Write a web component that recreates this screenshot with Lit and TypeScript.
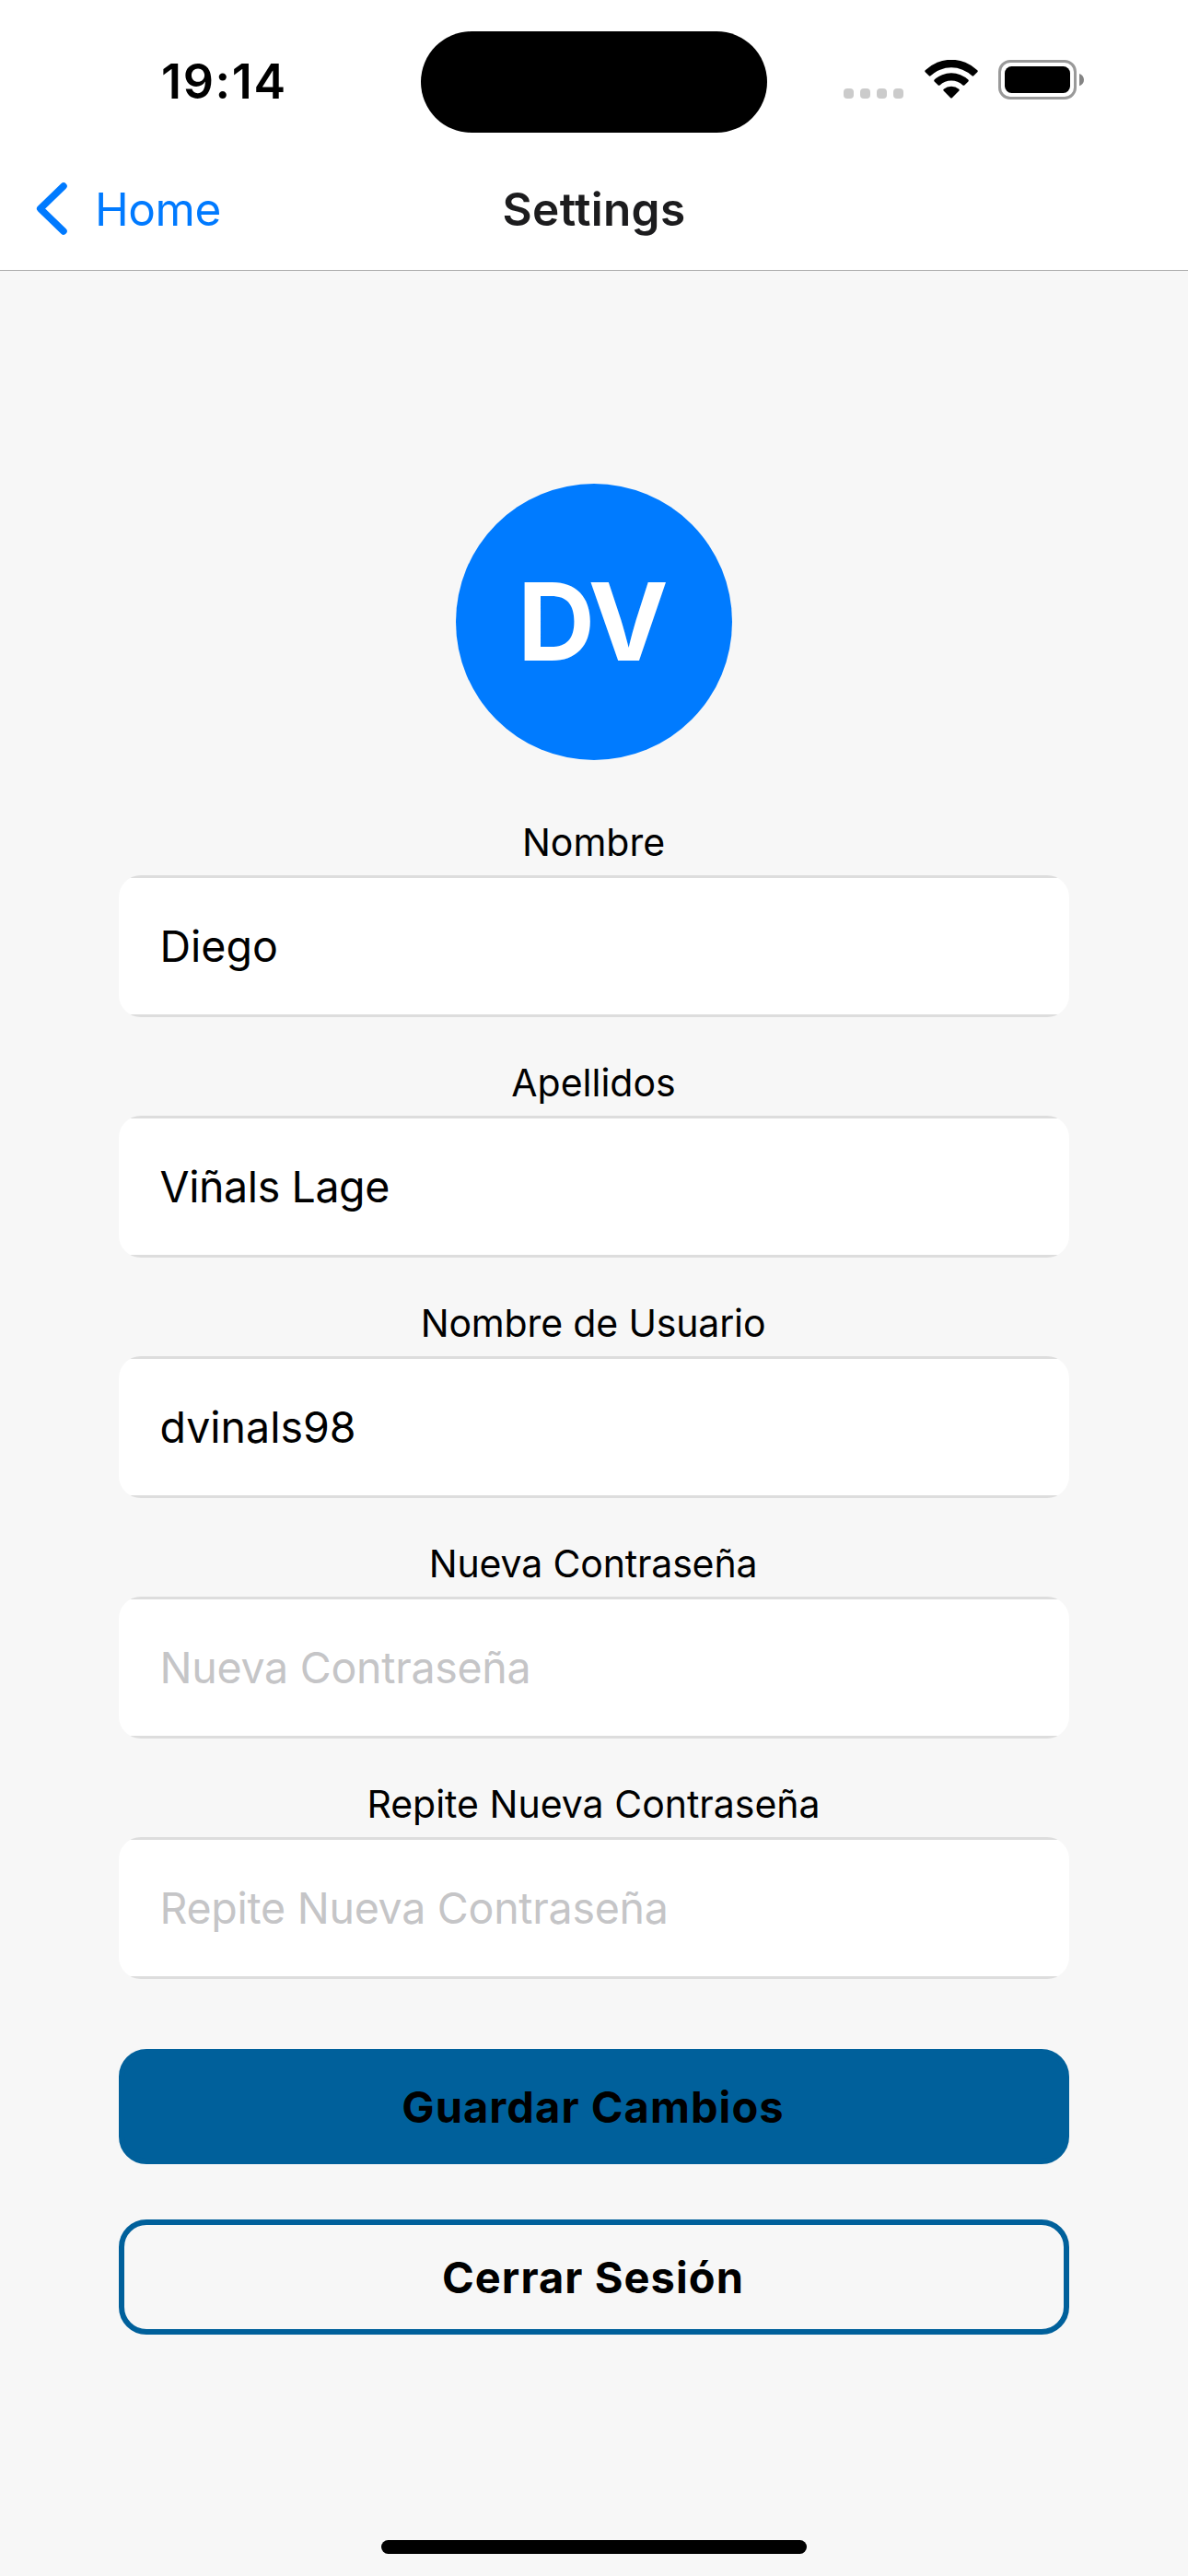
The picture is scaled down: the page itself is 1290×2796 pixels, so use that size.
import { LitElement, html, css } from "lit";
import { customElement, property, state } from "lit/decorators.js";
import { classMap } from "lit/directives/class-map.js";

interface Field {
  id: string;
  label: string;
  value: string;
  placeholder: string;
  secret?: boolean;
  tightLabel?: boolean;
  tightValue?: boolean;
}

const FIELDS: Field[] = [
  { id: "nombre", label: "Nombre", value: "Diego", placeholder: "Nombre" },
  { id: "apellidos", label: "Apellidos", value: "Viñals Lage", placeholder: "Apellidos", tightValue: true },
  { id: "usuario", label: "Nombre de Usuario", value: "dvinals98", placeholder: "Nombre de Usuario", tightLabel: true },
  { id: "nueva", label: "Nueva Contraseña", value: "", placeholder: "Nueva Contraseña", secret: true, tightLabel: true },
  { id: "repite", label: "Repite Nueva Contraseña", value: "", placeholder: "Repite Nueva Contraseña", secret: true },
];

@customElement("status-bar")
class StatusBar extends LitElement {
  static styles = css`
    :host {
      display: grid;
      grid-template-columns: 457px 376px 1fr;
      height: 177px;
      background: #fff;
    }
    .time {
      padding-left: 175px;
      font-size: 52px;
      font-weight: 600;
      line-height: 177px;
      letter-spacing: 1.67px;
      color: #000;
    }
    .island {
      height: 110px;
      margin-top: 34px;
      border-radius: 55px;
      background: #000;
    }
    .indicators {
      display: flex;
      align-items: flex-start;
      padding: 65px 0 0 83px;
    }
    .cellular {
      display: flex;
      gap: 7px;
      margin: 31px 23px 0 0;
    }
    .dot {
      width: 11px;
      height: 11px;
      border-radius: 4px;
      background: #cbcbcb;
    }
    .wifi {
      display: block;
      margin-right: 22px;
    }
    .battery {
      display: block;
    }
  `;

  render() {
    return html`
      <div class="time">19:14</div>
      <div class="island"></div>
      <div class="indicators">
        <div class="cellular">
          <span class="dot"></span><span class="dot"></span><span class="dot"></span><span class="dot"></span>
        </div>
        <svg class="wifi" width="58" height="43" viewBox="0 0 58 43">
          <path d="M0.7 11.3 A40.5 40.5 0 0 1 57.3 11.3 Q58.2 12.3 57.3 13.2 L53.2 17.3 Q52.4 18.1 51.5 17.3 A32.8 32.8 0 0 0 6.5 17.3 Q5.6 18.1 4.8 17.3 L0.7 13.2 Q-0.2 12.3 0.7 11.3Z" />
          <path d="M10.6 21.6 A26.8 26.8 0 0 1 47.4 21.6 Q48.2 22.5 47.4 23.4 L43.3 27.4 Q42.4 28.2 41.5 27.4 A18.6 18.6 0 0 0 16.5 27.4 Q15.6 28.2 14.7 27.4 L10.6 23.4 Q9.8 22.5 10.6 21.6Z" />
          <path d="M20.7 31.7 A13.2 13.2 0 0 1 37.3 31.7 Q38.2 32.6 37.4 33.5 L29.8 41.2 Q29 42 28.2 41.2 L20.6 33.5 Q19.8 32.6 20.7 31.7Z" />
        </svg>
        <svg class="battery" width="94" height="43" viewBox="0 0 94 43">
          <rect x="1.5" y="1.5" width="82" height="40" rx="11.5" fill="none" stroke="#999" stroke-width="3" />
          <rect x="7" y="7" width="71" height="29" rx="7.5" />
          <path d="M88 15 C91 16 93 18.5 93 21.7 C93 25 91 27.2 88 28.2Z" fill="#848484" />
        </svg>
      </div>
    `;
  }
}

@customElement("nav-header")
class NavHeader extends LitElement {
  @property() heading = "";
  @property() back = "";

  static styles = css`
    :host {
      display: grid;
      grid-template-columns: 1fr auto 1fr;
      align-items: center;
      box-sizing: border-box;
      height: 117px;
      padding-bottom: 16px;
      background: #fff;
      border-bottom: 1px solid #ababab;
      font-size: 49.5px;
      line-height: 99px;
    }
    .back {
      display: flex;
      align-items: center;
      padding-left: 38px;
      color: #007aff;
      letter-spacing: -0.44px;
    }
    .chevron {
      display: block;
      margin-right: 27px;
    }
    .title {
      font-weight: 600;
      letter-spacing: 0.32px;
      color: #1c1c1e;
    }
  `;

  render() {
    return html`
      <div class="back">
        <svg class="chevron" width="38" height="60" viewBox="0 0 38 60">
          <path d="M31 5 L5.7 29.5 L31 54" fill="none" stroke="#007aff" stroke-width="7.5" stroke-linecap="round" stroke-linejoin="round" />
        </svg>
        <span>${this.back}</span>
      </div>
      <div class="title">${this.heading}</div>
    `;
  }
}

@customElement("app-root")
class AppRoot extends LitElement {
  @state() private fields: Field[] = FIELDS;

  static styles = css`
    :host {
      display: flex;
      flex-direction: column;
      box-sizing: border-box;
      width: 100%;
      height: 2796px;
      overflow: hidden;
      background: #f7f7f7;
      font-family: Inter, "Liberation Sans", sans-serif;
      color: #000;
    }
    .content {
      flex: 1;
      display: flex;
      flex-direction: column;
      padding: 231px 129px 0;
    }
    .avatar {
      align-self: center;
      display: flex;
      align-items: center;
      justify-content: center;
      box-sizing: border-box;
      width: 300px;
      height: 300px;
      padding-right: 5px;
      margin-bottom: 54px;
      border-radius: 50%;
      background: #007bff;
      color: #fff;
      font-size: 116.5px;
      font-weight: 700;
      line-height: 140px;
      letter-spacing: -2.77px;
    }
    .field {
      display: flex;
      flex-direction: column;
      margin-bottom: 36px;
    }
    .label {
      height: 71px;
      padding-right: 1px;
      font-size: 41px;
      line-height: 71px;
      text-align: center;
    }
    .label.tight {
      padding-right: 2px;
      letter-spacing: -0.15px;
    }
    .input {
      box-sizing: border-box;
      width: 100%;
      height: 154px;
      margin: 0;
      padding: 0 44.5px;
      border: 0;
      border-radius: 24px;
      background: linear-gradient(#ddd 3px, #fff 3px, #fff 151px, #ddd 151px);
      color: #000;
      font-family: inherit;
      font-size: 46.5px;
    }
    .input.tight {
      letter-spacing: -0.4px;
    }
    .input::placeholder {
      color: #c5c5c7;
      letter-spacing: -0.27px;
      opacity: 1;
    }
    .actions {
      display: flex;
      flex-direction: column;
      gap: 60px;
      padding-top: 40px;
    }
    .button {
      box-sizing: border-box;
      height: 125px;
      padding: 0 2px 0 0;
      border: 6px solid #00609b;
      border-radius: 30px;
      background: transparent;
      color: #000;
      font-family: inherit;
      font-size: 47px;
      font-weight: 700;
      line-height: 113px;
      letter-spacing: 1.06px;
      text-align: center;
    }
    .button.primary {
      background: #00609b;
    }
    .home-indicator {
      align-self: center;
      width: 462px;
      height: 15px;
      margin-bottom: 24px;
      border-radius: 8px;
      background: #000;
    }
  `;

  private renderField(f: Field) {
    return html`
      <div class="field">
        <label class=${classMap({ label: true, tight: !!f.tightLabel })} for=${f.id}>${f.label}</label>
        <input
          class=${classMap({ input: true, tight: !!f.tightValue })}
          id=${f.id}
          type=${f.secret ? "password" : "text"}
          .value=${f.value}
          placeholder=${f.placeholder}
        />
      </div>
    `;
  }

  render() {
    return html`
      <status-bar></status-bar>
      <nav-header heading="Settings" back="Home"></nav-header>
      <div class="content">
        <div class="avatar">DV</div>
        ${this.fields.map((f) => this.renderField(f))}
        <div class="actions">
          <button class="button primary">Guardar Cambios</button>
          <button class="button">Cerrar Sesión</button>
        </div>
      </div>
      <div class="home-indicator"></div>
    `;
  }
}
